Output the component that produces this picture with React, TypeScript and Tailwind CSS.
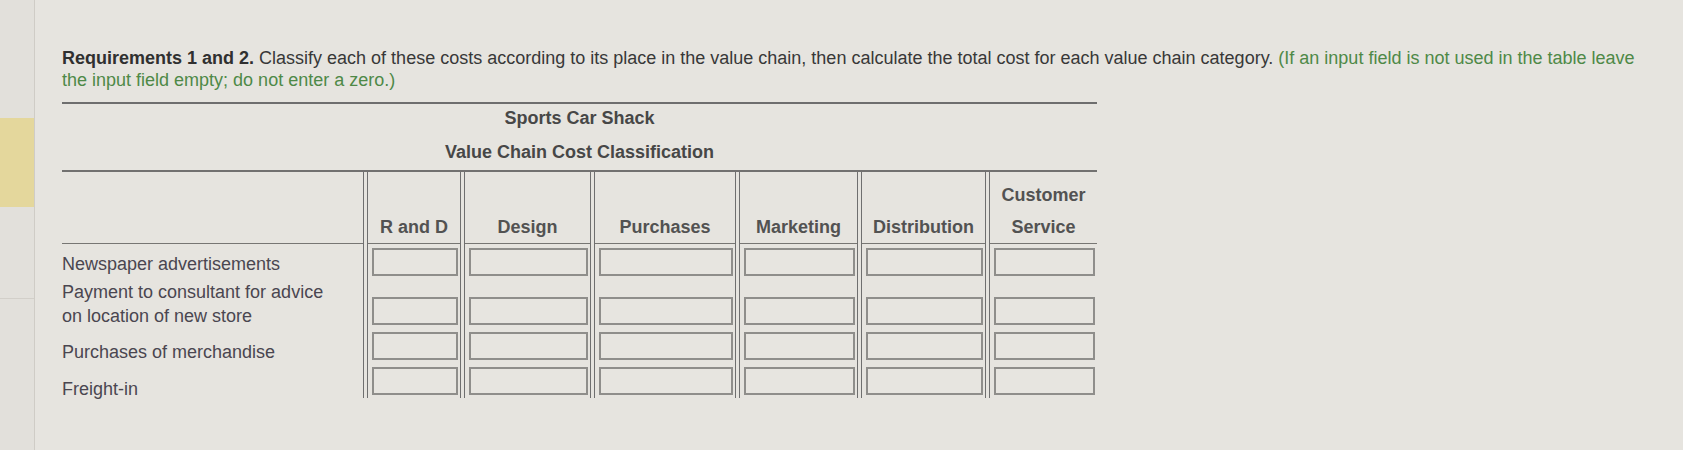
const columns = [
  { name: "R and D", w: "w-[92px]" },
  { name: "Design", w: "w-[125px]" },
  { name: "Purchases", w: "w-[140px]" },
  { name: "Marketing", w: "w-[117px]" },
  { name: "Distribution", w: "w-[123px]" },
  { name: "Customer Service", w: "w-[107px]" },
];

const rowCls = [
  "h-[35px] items-center",
  "h-[49px] items-end pb-[3px]",
  "h-[35px] items-center",
  "h-[35px] items-center",
];

const labels = [
  { text: ["Newspaper advertisements"], cls: "h-[35px] pt-[4px]" },
  { text: ["Payment to consultant for advice", "on location of new store"], cls: "h-[49px] pt-[1px]" },
  { text: ["Purchases of merchandise"], cls: "h-[35px] pt-[12px]" },
  { text: ["Freight-in"], cls: "h-[35px] pt-[17px]" },
];

function DoubleRule() {
  return <div className="w-[5px] shrink-0 border-x-[1.5px] border-[#6f6f6f]" />;
}

function Column({ name, w }: { name: string; w: string }) {
  const [first, second] = name === "Customer Service" ? ["Customer", "Service"] : [name, null];
  return (
    <div className={`${w} shrink-0 flex flex-col`}>
      <div className="h-[72px] border-b-[1.5px] border-[#777673] flex flex-col items-center justify-end text-center font-bold text-[18px] leading-[32px] text-[#525252]">
        <span>{first}</span>
        {second && <span>{second}</span>}
      </div>
      {rowCls.map((r, i) => (
        <div key={i} className={`${r} flex`}>
          <input
            type="text"
            aria-label={`${name} row ${i + 1}`}
            className="h-[28px] w-full ml-[4px] mr-[2px] border-2 border-[#8f8e8b] bg-[#e7e5e0] outline-none"
          />
        </div>
      ))}
    </div>
  );
}

export default function App() {
  return (
    <div className="w-[1683px] h-[450px] flex bg-[#e6e4df] font-['Liberation_Sans',Arial,sans-serif] overflow-hidden">
      <aside className="w-[35px] shrink-0 border-r border-[#cfccc6] bg-[#e2e0db] flex flex-col">
        <div className="h-[118px]" />
        <div className="h-[89px] bg-[#e4d79c]" />
        <div className="h-[92px] border-b border-[#d2cfc9]" />
      </aside>

      <main className="pl-[27px] pt-[47px]">
        <p className="text-[18px] leading-[22px] text-[#383838] whitespace-nowrap">
          <span className="font-bold text-[#303030]">Requirements 1 and 2.</span> Classify each of these costs according to its place in the value chain, then calculate the total cost for each value chain category.{" "}
          <span className="text-[#4e8947]">(If an input field is not used in the table leave</span>
          <br />
          <span className="text-[#4e8947]">the input field empty; do not enter a zero.)</span>
        </p>

        <div className="w-[1035px] mt-[11px] border-t-2 border-[#6e6e6e]">
          <div className="mt-[3px] text-center font-bold text-[18px] leading-[22px] text-[#474747]">Sports Car Shack</div>
          <div className="mt-[12px] text-center font-bold text-[18px] leading-[22px] text-[#474747]">
            Value Chain Cost Classification
          </div>

          <div className="mt-[7px] flex border-t-2 border-[#727170]">
            <div className="w-[301px] shrink-0 flex flex-col text-[18px] text-[#4a4650]">
              <div className="h-[72px] border-b-[1.5px] border-[#777673]" />
              {labels.map((l, i) => (
                <div key={i} className={`${l.cls} flex flex-col justify-center leading-[24px]`}>
                  {l.text.map((t) => (
                    <span key={t} className="whitespace-nowrap">
                      {t}
                    </span>
                  ))}
                </div>
              ))}
            </div>
            {columns.map((c) => (
              <div key={c.name} className="flex">
                <DoubleRule />
                <Column name={c.name} w={c.w} />
              </div>
            ))}
          </div>
        </div>
      </main>
    </div>
  );
}
